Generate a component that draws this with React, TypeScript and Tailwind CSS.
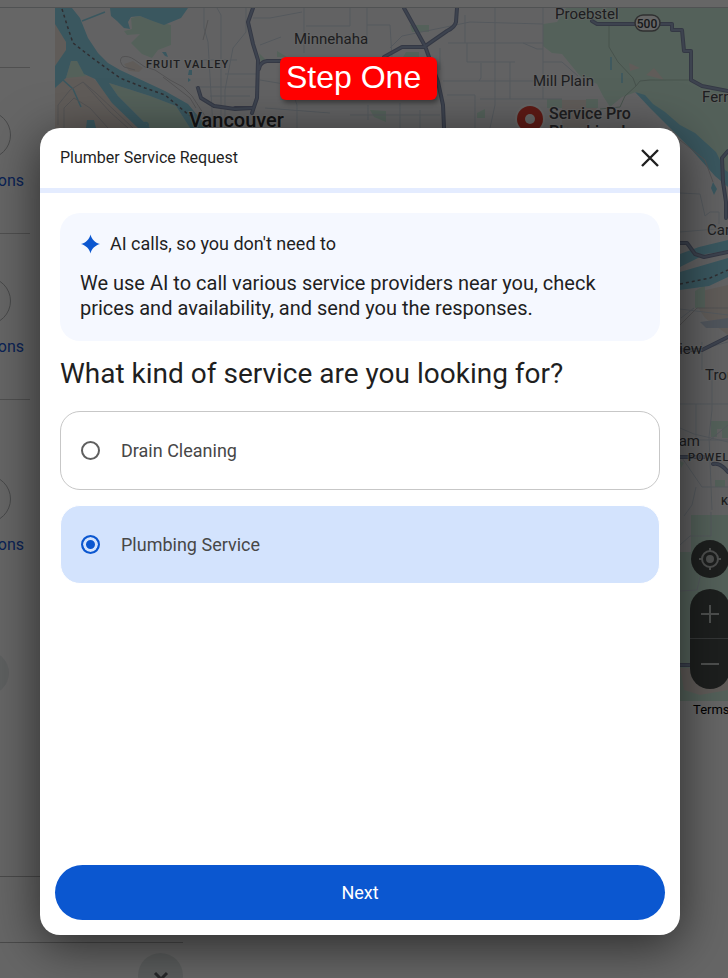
import { useState } from 'react';

const services = ['Drain Cleaning', 'Plumbing Service'];

const places = [
  { height: 'h-[166px]', pad: 'pt-[43px]' },
  { height: 'h-[166px]', pad: 'pt-[43px]' },
  { height: 'h-[477px]', pad: 'pt-[75px]' },
];

function Sparkle() {
  return (
    <svg viewBox="0 0 20 20" className="h-5 w-5 shrink-0" fill="#0b57d0" aria-hidden="true">
      <path d="M10.5 0.4C11.6 5.2 15 8.6 20 10C15 11.4 11.6 14.8 10.5 19.6C9.4 14.8 6 11.4 1 10C6 8.6 9.4 5.2 10.5 0.4Z" />
    </svg>
  );
}

function CityMap() {
  return (
    <svg viewBox="55 8 673 693" width="673" height="693" className="block max-w-none font-[Roboto,sans-serif]" aria-label="Map of Vancouver">
      <rect x="55" y="8" width="673" height="693" fill="#f5f6f8" />

      {/* Ground */}
      <g fill="#efe6de">
        <path d="M55 22L66 42V54L55 66Z" />
        <path d="M55 88L66 77L90 75L110 95L140 128V200H55Z" />
        <path d="M124 64L133 61L143 68L139 72L129 71Z" />
        <path d="M697 292L728 285V335L705 318L697 306Z" />
        <path d="M680 660L728 650V701H690Z" />
        <path d="M562 100H597V108L586 128H562Z" />
      </g>
      <g fill="#d1f3e0">
        <path d="M131 43L140 34L127 35L124 31L132 29L131 18L140 16L150 20L171 25V45L158 50L152 58L142 54Z" />
        <path d="M66 78L71 61H77L86 76Z" />
        <path d="M109 83L125 88L150 96L176 106L190 128H150L118 96Z" />
        <path d="M543 24L557 22L566 8H728V150L715 146L690 140L665 120L636 92L622 97L610 107L603 96L597 84L580 76L562 54L552 53L543 46Z" />
        <path d="M680 118H728V182L712 170L690 140Z" />
        <path d="M410 25H429V32H412Z" />
        <path d="M406 52H419V57H403Z" />
        <path d="M259 53L267 61L261 64Z" />
        <path d="M277 51L287 57H277Z" />
        <path d="M370 110L386 111V122L374 117Z" />
        <path d="M477 113L485 109V118H477Z" />
        <path d="M547 99H562V108H547ZM586 99H598V108H586Z" />
        <path d="M695 291L705 285V308H695Z" />
        <path d="M711 421H728V438H722V429H717V437H711Z" />
        <path d="M715 480H725V487H715Z" />
        <path d="M680 461L684 463L681 468Z" />
        <path d="M691 515H728V701H680V552H691Z" />
      </g>
      <path d="M629 63L640 68L630 71ZM646 75L654 68L664 80Z" fill="#efe6de" />
      <path d="M680 668H700L728 655V690L700 695L684 690Z" fill="#efe6de" />

      {/* Water */}
      <g fill="#91d9ee">
        <path d="M55 8H72L80 18L88 38L98 53L108 63L120 70L165 91L188 104L208 128H190L176 106L150 96L125 88L109 83L118 96L150 128H138L112 103L95 79L84 74L77 61H71L66 78L55 88V66L66 50V42L55 24Z" />
        <path d="M110 8H188L181 18L164 25L150 20L140 16L131 17L128 22L130 29L124 28L117 21L111 16Z" />
        <path d="M162 52H166L168 57L165 56Z" />
        <path d="M189 70H192V75H188ZM188 78L191 80L188 82Z" />
        <path d="M87 120H94L96 128H86Z" />
        <path d="M635 92L645 95L653 104L665 112L680 125L695 133L716 152L725 170L728 172V187L715 176L690 148L668 126L650 108Z" />
        <path d="M713 182L717 189L714 195L711 188Z" />
        <path d="M680 254L699 247L728 240V251L706 254L680 267Z" />
        <path d="M680 272L728 258V277L709 286L680 290Z" />
      </g>
      <g fill="none" stroke="#91d9ee">
        <path d="M82 21L105 12" strokeWidth="1.5" />
        <path d="M63 80L73 89L81 107" strokeWidth="1.5" />
        <path d="M611 57V70M622 73V83" strokeWidth="1.5" />
        <path d="M143 128V125Q144 122 147 123Q149 125 147 128" strokeWidth="2" />
      </g>
      <path d="M700 322L728 318V328H706Z" fill="#c9d4e7" />

      {/* Streets */}
      <g fill="none" stroke="#d3dde8" strokeWidth="1">
        <path d="M204 8V28L208 42L213 128M217 8L221 15V128M246 8V32L233 48L225 90V128M200 60H237M225 74H256M195 87H258M210 96H250" />
        <path d="M253 18H270L302 12M304 8V53M306 26H350V8M260 45L281 37M260 80L290 85L297 105V128M265 108L330 113" />
        <path d="M367 8V38M367 25H390L392 57M390 48L402 36L470 22L543 24M440 48V70M448 43H543M467 43V62H515M481 63V78L479 81" />
        <path d="M443 81H543M510 62V99M480 99H562M495 8V105L490 128M543 8V99M543 62H562L578 76M523 43L537 49H543" />
        <path d="M465 15V43M447 95H475V128M400 103V128M350 115H440M368 105V120M420 110V128" />
        <path d="M680 193L700 194L705 216L710 212H719V224M680 232L728 228M680 309L728 315M694 308L681 318M680 355L728 342M702 342V370M680 404H728M696 404V440M712 370V410L709 437L712 510M680 440H728M680 428L694 434L728 442M680 455L702 487H728M696 487L692 505L684 516" />
        <path d="M728 425L710 440M680 545L690 536H711V512M680 591L697 590L703 565" />
      </g>
      <g fill="none" stroke="#cfcdd0" strokeWidth="1">
        <path d="M58 125V105L70 90L83 82L110 112L128 128M64 128V108L74 98L90 108L108 128M83 82L96 93L133 128" />
        <path d="M135 70L124 67Q118 61 122 57Q128 55 135 60L145 67L155 70L170 80L183 87L192 96L205 116M163 77L190 98L196 108" />
        <path d="M203 40L208 20M680 140L705 160L713 182M680 325L697 308H728" />
      </g>
      <path d="M609 24V47L618 62L633 78L636 86L640 81L650 80H690M636 86L625 96L620 107L600 109" fill="none" stroke="#b2cdbf" strokeWidth="1" />

      {/* Highways */}
      <g fill="none" strokeLinejoin="round" strokeLinecap="round">
        <g stroke="#838dab" strokeWidth="4">
          <path d="M253 8L248 22L253 44L258 60L257 98L252 113M259 69Q260 62 267 61H290M235 108L252 108" />
          <path d="M198 88L201 98L214 106L235 109L252 108" />
          <path d="M384 57L402 47H424L447 31Q455 27 456 22L457 8M404 8L425 46L438 82L443 105L444 128" />
          <path d="M592 21L597 24H672V30H682L684 51H691V80L702 86L728 91" />
          <path d="M728 151L722 158L723 182L726 202V218M680 243H687L695 254L704 257L728 252" />
          <path d="M680 350H702L728 337M680 457H704M713 464Q720 462 728 472M680 665H728" />
        </g>
        <g stroke="#9aa9c6" strokeWidth="2">
          <path d="M253 8L248 22L253 44L258 60L257 98L252 113M259 69Q260 62 267 61H290" />
          <path d="M198 88L201 98L214 106L235 109L252 108" />
          <path d="M384 57L402 47H424L447 31Q455 27 456 22L457 8M404 8L425 46L438 82L443 105L444 128" />
          <path d="M592 21L597 24H672V30H682L684 51H691V80L702 86L728 91" />
          <path d="M728 151L722 158L723 182L726 202V218M680 243H687L695 254L704 257L728 252" />
          <path d="M680 350H702L728 337M680 457H704M713 464Q720 462 728 472M680 665H728" />
        </g>
      </g>
      <path d="M62 9L67 25L73 43L95 60L120 78L145 88L165 95L190 116M680 284L710 278L728 270" fill="none" stroke="#77737b" strokeWidth="1.5" strokeDasharray="3 3" />

      <rect x="635" y="15" width="25" height="16" rx="8" fill="#fff" stroke="#77787a" strokeWidth="1.5" />
      <text x="647" y="28" fontSize="12" textAnchor="middle" fill="#3c4043" fontWeight="500">500</text>

      {/* Place names */}
      <g fill="#4b4c50" stroke="#fff" strokeWidth="2" strokeOpacity="0.6" paintOrder="stroke" fontSize="15">
        <text x="294" y="44">Minnehaha</text>
        <text x="555" y="19">Proebstel</text>
        <text x="533" y="86">Mill Plain</text>
        <text x="702" y="102">Fern Prairie</text>
        <text x="707" y="235">Camas</text>
        <text x="702" y="354" textAnchor="end">Fairview</text>
        <text x="705" y="380">Troutdale</text>
        <text x="700" y="446" textAnchor="end">Gresham</text>
        <g fontSize="11" fontWeight="500" letterSpacing="1">
          <text x="146" y="68">FRUIT VALLEY</text>
          <text x="688" y="461">POWELL VALLEY</text>
          <text x="721" y="505">KELSO</text>
        </g>
        <g fontSize="16" fontWeight="500">
          <text x="549" y="119">Service Pro</text>
          <text x="549" y="137">Plumbing L</text>
        </g>
        <text x="189" y="127" fontSize="20" fontWeight="500" fill="#303134">Vancouver</text>
      </g>

      <circle cx="530" cy="119" r="15" fill="#fff" />
      <circle cx="530" cy="119" r="13" fill="#ea4335" />
      <circle cx="530" cy="119" r="5" fill="#fff" />
    </svg>
  );
}

function MapControls() {
  return (
    <div className="absolute top-[532px] left-[635px] flex w-10 flex-col items-center gap-[11px] text-[#c4c7c5]">
      <button aria-label="Show your location" className="flex h-[38px] w-[38px] items-center justify-center rounded-full bg-[#4a4f4d]">
        <svg viewBox="0 0 24 24" className="h-6 w-6" fill="none" stroke="currentColor" strokeWidth="2">
          <circle cx="12" cy="12" r="8" />
          <circle cx="12" cy="12" r="4" fill="currentColor" stroke="none" />
          <path d="M12 1V4M12 20V23M1 12H4M20 12H23" />
        </svg>
      </button>
      <div className="flex w-10 flex-col overflow-hidden rounded-full bg-[#4a4f4d]">
        <button aria-label="Zoom in" className="flex h-[50px] items-center justify-center border-b border-[#85898a]">
          <svg viewBox="0 0 18 18" className="h-[18px] w-[18px]" stroke="currentColor" strokeWidth="2"><path d="M9 0V18M0 9H18" /></svg>
        </button>
        <button aria-label="Zoom out" className="flex h-[50px] items-center justify-center">
          <svg viewBox="0 0 18 18" className="h-[18px] w-[18px]" stroke="currentColor" strokeWidth="2"><path d="M0 9H18" /></svg>
        </button>
      </div>
    </div>
  );
}

function ResultsPage() {
  return (
    <div className="absolute inset-0 overflow-hidden bg-white">
      <div className="h-2 border-b border-[#c9cccf]" />
      <div className="flex items-start">
        <div className="w-[55px] shrink-0 overflow-hidden pt-[59px]">
          {places.map((p, i) => (
            <div key={i} className={`flex w-[30px] flex-col items-end border-t border-[#c9c9c9] pr-[6px] ${p.height} ${p.pad}`}>
              <span className="mr-[13px] h-[48px] w-[48px] shrink-0 rounded-full border border-[#b4b6b8]" />
              <a href="#directions" className="mt-3 font-[Roboto,sans-serif] text-base leading-5 text-[#1a57d6]">Directions</a>
              {i === 2 && <span className="mt-[96px] mr-[15px] h-11 w-11 shrink-0 rounded-full bg-[#eceff1]" />}
            </div>
          ))}
        </div>
        <div className="relative min-w-0 flex-1">
          <CityMap />
          <MapControls />
          <div className="h-5 pl-[638px] font-[Roboto,sans-serif] text-[13px] leading-[18px] text-black">Terms</div>
        </div>
      </div>
      <div className="h-[67px] w-[183px] border-y border-[#b9b9b9]" />
      <div className="flex w-[183px] justify-end pt-[10px]">
        <button aria-label="Show more" className="flex h-[45px] w-[45px] items-center justify-center rounded-full bg-[#e4e9e8]">
          <svg viewBox="0 0 16 10" className="h-[10px] w-4" fill="none" stroke="#5f6368" strokeWidth="3"><path d="M2 2L8 8L14 2" /></svg>
        </button>
      </div>
    </div>
  );
}

export default function App() {
  const [selected, setSelected] = useState(1);

  return (
    <div className="relative h-screen overflow-hidden font-[Roboto,sans-serif] text-[#1f1f1f]">
      <ResultsPage />
      <div className="absolute inset-0 flex bg-black/60 pt-32 pr-12 pb-[43px] pl-10">
        <div role="dialog" aria-labelledby="dialog-title" className="flex flex-1 flex-col rounded-[20px] bg-white shadow-[0_10px_50px_rgba(0,0,0,0.6)]">
          <div className="flex h-[65px] items-center justify-between border-b-5 border-[#e4ecff] px-5">
            <h2 id="dialog-title" className="text-base">Plumber Service Request</h2>
            <button aria-label="Close">
              <svg viewBox="0 0 20 20" className="h-5 w-5" stroke="#1f1f1f" strokeWidth="2.4"><path d="M2 2L18 18M18 2L2 18" /></svg>
            </button>
          </div>

          <div className="flex-1 px-5 pt-5">
            <div className="rounded-[20px] bg-[#f5f8ff] px-5 pt-[19px] pb-5">
              <div className="flex items-center gap-[10px] text-lg leading-6">
                <Sparkle />
                <p>AI calls, so you don't need to</p>
              </div>
              <p className="mt-[15px] text-xl leading-[25px]">
                We use AI to call various service providers near you, check prices and availability, and send you the responses.
              </p>
            </div>

            <fieldset>
              <legend className="pt-[15px] pb-[19px] text-[28px] leading-9">What kind of service are you looking for?</legend>
              <div className="flex flex-col gap-[15px]">
                {services.map((s, i) => (
                  <label
                    key={s}
                    className={`flex h-[79px] items-center gap-[21px] rounded-[20px] border px-5 text-lg text-[#474747] ${selected === i ? 'border-white bg-[#d3e3fd]' : 'border-[#c7c7c7]'}`}
                  >
                    <input
                      type="radio"
                      name="service"
                      checked={selected === i}
                      onChange={() => setSelected(i)}
                      className="h-[19px] w-[19px] appearance-none rounded-full border-2 border-[#5f5f5f] checked:border-[#0b57d0] checked:bg-[#0b57d0] checked:shadow-[inset_0_0_0_3px_#d3e3fd]"
                    />
                    {s}
                  </label>
                ))}
              </div>
            </fieldset>
          </div>

          <div className="px-[15px] pb-[15px]">
            <button className="h-[55px] w-full rounded-full bg-[#0b57d0] text-lg text-white">Next</button>
          </div>
        </div>
      </div>
      <div className="absolute top-[57px] left-[280px] h-[43px] w-[157px] rounded-md bg-[#ff0000] pl-[6px] font-['Liberation_Sans',sans-serif] text-[32px] leading-[40px] text-white shadow-[2px_3px_5px_rgba(0,0,0,0.4)]">
        Step One
      </div>
    </div>
  );
}
